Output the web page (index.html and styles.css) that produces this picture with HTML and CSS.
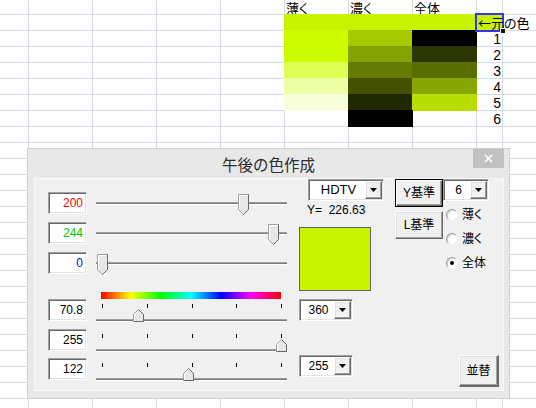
FILE: index.html
```html
<!DOCTYPE html>
<html lang="ja">
<head>
<meta charset="utf-8">
<title>午後の色作成</title>
<link rel="stylesheet" href="styles.css">
</head>
<body>
<div class="sheet">
  <div class="cell hdr c5">薄く</div>
  <div class="cell hdr c6">濃く</div>
  <div class="cell hdr c7">全体</div>

  <div class="cell fill band r1" style="background:#c8f400"></div>
  <div class="cell fill c8 r1 sel" style="background:#c8f400"><span class="orig">←元の色</span><span class="handle"></span></div>

  <div class="cell fill c5 r2" style="background:#cdfb00"></div>
  <div class="cell fill c6 r2" style="background:#a7cb00"></div>
  <div class="cell fill c7 r2" style="background:#000000"></div>
  <div class="cell num c8 r2">1</div>

  <div class="cell fill c5 r3" style="background:#cdfb00"></div>
  <div class="cell fill c6 r3" style="background:#85a300"></div>
  <div class="cell fill c7 r3" style="background:#2c3600"></div>
  <div class="cell num c8 r3">2</div>

  <div class="cell fill c5 r4" style="background:#defd55"></div>
  <div class="cell fill c6 r4" style="background:#647a00"></div>
  <div class="cell fill c7 r4" style="background:#5a6e00"></div>
  <div class="cell num c8 r4">3</div>

  <div class="cell fill c5 r5" style="background:#edfea5"></div>
  <div class="cell fill c6 r5" style="background:#435100"></div>
  <div class="cell fill c7 r5" style="background:#88a600"></div>
  <div class="cell num c8 r5">4</div>

  <div class="cell fill c5 r6" style="background:#f7ffdb"></div>
  <div class="cell fill c6 r6" style="background:#212900"></div>
  <div class="cell fill c7 r6" style="background:#b7de00"></div>
  <div class="cell num c8 r6">5</div>

  <div class="cell fill c6 r7" style="background:#000000"></div>
  <div class="cell num c8 r7">6</div>
</div>

<div class="dialog">
  <div class="titlebar">
    <span></span>
    <span class="title">午後の色作成</span>
    <span class="close"><svg width="9" height="9" viewBox="0 0 9 9"><path d="M1 1L8 8M8 1L1 8" stroke="#fff" stroke-width="1.6"/></svg></span>
  </div>
  <div class="panel">
    <div class="left">
      <div class="srow">
        <div class="tbox sunken red">200</div>
        <div class="slider">
          <span class="track mid-track"></span>
          <svg class="thumb dn" style="left:142px" width="11" height="21" viewBox="0 0 11 21"><path d="M0.5 15.5V0.5H10.5V15.5L5.5 20.5Z" fill="#e7e7e7" stroke="#a0a0a0"/><path d="M1.5 15V1.5H9.5" fill="none" stroke="#fff"/><path d="M10.5 0.5V15.5L5.5 20.5" fill="none" stroke="#696969"/></svg>
        </div>
      </div>
      <div class="srow gap8">
        <div class="tbox sunken green">244</div>
        <div class="slider">
          <span class="track mid-track"></span>
          <svg class="thumb dn" style="left:172px" width="11" height="21" viewBox="0 0 11 21"><path d="M0.5 15.5V0.5H10.5V15.5L5.5 20.5Z" fill="#e7e7e7" stroke="#a0a0a0"/><path d="M1.5 15V1.5H9.5" fill="none" stroke="#fff"/><path d="M10.5 0.5V15.5L5.5 20.5" fill="none" stroke="#696969"/></svg>
        </div>
      </div>
      <div class="srow gap8">
        <div class="tbox sunken blue">0</div>
        <div class="slider">
          <span class="track mid-track"></span>
          <svg class="thumb dn" style="left:1px" width="11" height="21" viewBox="0 0 11 21"><path d="M0.5 15.5V0.5H10.5V15.5L5.5 20.5Z" fill="#e7e7e7" stroke="#a0a0a0"/><path d="M1.5 15V1.5H9.5" fill="none" stroke="#fff"/><path d="M10.5 0.5V15.5L5.5 20.5" fill="none" stroke="#696969"/></svg>
        </div>
      </div>

      <div class="rainbow"></div>

      <div class="srow">
        <div class="tbox sunken">70.8</div>
        <div class="slider">
          <div class="ticks"><i></i><i></i><i></i><i></i><i></i></div>
          <span class="track low-track"></span>
          <svg class="thumb up" style="left:37px" width="11" height="13" viewBox="0 0 11 13"><path d="M0.5 12.5V5.5L5.5 0.5L10.5 5.5V12.5Z" fill="#e7e7e7" stroke="#a0a0a0"/><path d="M1.5 12V5.9L5.5 1.9" fill="none" stroke="#fff"/><path d="M5.5 0.5L10.5 5.5V12.5H0.5" fill="none" stroke="#696969"/></svg>
        </div>
      </div>
      <div class="srow gap8">
        <div class="tbox sunken">255</div>
        <div class="slider">
          <div class="ticks"><i></i><i></i><i></i><i></i><i></i></div>
          <span class="track low-track"></span>
          <svg class="thumb up" style="left:180px" width="11" height="13" viewBox="0 0 11 13"><path d="M0.5 12.5V5.5L5.5 0.5L10.5 5.5V12.5Z" fill="#e7e7e7" stroke="#a0a0a0"/><path d="M1.5 12V5.9L5.5 1.9" fill="none" stroke="#fff"/><path d="M5.5 0.5L10.5 5.5V12.5H0.5" fill="none" stroke="#696969"/></svg>
        </div>
      </div>
      <div class="srow gap7">
        <div class="tbox sunken">122</div>
        <div class="slider">
          <div class="ticks"><i></i><i></i><i></i><i></i><i></i></div>
          <span class="track low-track"></span>
          <svg class="thumb up" style="left:87px" width="11" height="13" viewBox="0 0 11 13"><path d="M0.5 12.5V5.5L5.5 0.5L10.5 5.5V12.5Z" fill="#e7e7e7" stroke="#a0a0a0"/><path d="M1.5 12V5.9L5.5 1.9" fill="none" stroke="#fff"/><path d="M5.5 0.5L10.5 5.5V12.5H0.5" fill="none" stroke="#696969"/></svg>
        </div>
      </div>
    </div>

    <div class="mid">
      <div class="combo sunken hdtv"><span class="val">HDTV</span><span class="drop raised"><svg width="7" height="4" viewBox="0 0 7 4"><path d="M0 0H7L3.5 4Z" fill="#000"/></svg></span></div>
      <div class="ylabel">Y=&nbsp; 226.63</div>
      <div class="swatch" style="background:#c8f400"></div>
      <div class="combo sunken cb360"><span class="val">360</span><span class="drop raised"><svg width="7" height="4" viewBox="0 0 7 4"><path d="M0 0H7L3.5 4Z" fill="#000"/></svg></span></div>
      <div class="combo sunken cb255"><span class="val">255</span><span class="drop raised"><svg width="7" height="4" viewBox="0 0 7 4"><path d="M0 0H7L3.5 4Z" fill="#000"/></svg></span></div>
    </div>

    <div class="right">
      <div class="rtop">
        <div class="colA">
          <div class="btn default">Y基準</div>
          <div class="btn raised lbtn">L基準</div>
        </div>
        <div class="colB">
          <div class="combo sunken cb6"><span class="val">6</span><span class="drop raised"><svg width="7" height="4" viewBox="0 0 7 4"><path d="M0 0H7L3.5 4Z" fill="#000"/></svg></span></div>
          <div class="radios">
            <div class="radio"><span class="dot"></span><span>薄く</span></div>
            <div class="radio"><span class="dot"></span><span>濃く</span></div>
            <div class="radio"><span class="dot on"></span><span>全体</span></div>
          </div>
        </div>
      </div>
      <div class="btn raised sort">並替</div>
    </div>
  </div>
</div>
</body>
</html>
```

FILE: styles.css
```css
* { box-sizing: border-box; }
html, body { margin: 0; padding: 0; }
body {
  width: 536px;
  height: 408px;
  overflow: hidden;
  position: relative;
  background: #fff;
  font-family: "Liberation Sans", "Noto Sans CJK JP", sans-serif;
  font-size: 12px;
  color: #000;
}

/* ---------- spreadsheet ---------- */
.sheet {
  display: grid;
  grid-template-columns: 29px repeat(7, 64px) 26px 1fr;
  grid-template-rows: 15px repeat(25, 16px);
  height: 408px;
  background-image:
    linear-gradient(to right, transparent 502px, #d4dae6 502px, #d4dae6 503px, transparent 503px),
    repeating-linear-gradient(to right, transparent 0 28px, #d4dae6 28px 29px, transparent 29px 64px),
    repeating-linear-gradient(to bottom, transparent 0 14px, #d4dae6 14px 15px, transparent 15px 16px);
  font-family: "Noto Sans CJK JP", sans-serif;
  font-size: 13px;
  font-feature-settings: "palt";
}
.cell { line-height: 16px; white-space: nowrap; }
.hdr { grid-row: 1; line-height: 15px; padding-left: 1px; }
.c5 { grid-column: 6; }
.c6 { grid-column: 7; }
.c7 { grid-column: 8; }
.c8 { grid-column: 9; }
.band { grid-column: 6 / 9; }
.r1 { grid-row: 2; }
.r2 { grid-row: 3; }
.r3 { grid-row: 4; }
.r4 { grid-row: 5; }
.r5 { grid-row: 6; }
.r6 { grid-row: 7; }
.r7 { grid-row: 8; }
.fill { margin: -1px 0 0 -1px; }
.num {
  text-align: right;
  padding-right: 2px;
  font-family: "Liberation Sans", sans-serif;
  font-size: 14px;
  line-height: 16px;
}
.sel {
  position: relative;
  outline: 2px solid #3a34f0;
  outline-offset: -1px;
}
.orig { position: relative; z-index: 1; padding-left: 2px; line-height: 17px; }
.handle {
  position: absolute;
  right: -3px;
  bottom: -3px;
  width: 6px;
  height: 6px;
  background: #111;
  border: 1px solid #fff;
  z-index: 2;
}

/* ---------- dialog ---------- */
.dialog {
  position: absolute;
  left: 27px;
  top: 148px;
  width: 483px;
  height: 251px;
  background: #e8e8e8;
  border: 1px solid #d0d0d0;
  display: flex;
  flex-direction: column;
  font-feature-settings: "palt";
}
.titlebar {
  height: 29px;
  flex: none;
  display: grid;
  grid-template-columns: 1fr auto 1fr;
}
.title {
  align-self: center;
  font-family: "Noto Sans CJK JP", sans-serif;
  font-feature-settings: normal;
  font-size: 15.5px;
  line-height: 20px;
  color: #2e2e2e;
  padding-top: 1px;
}
.close {
  justify-self: end;
  align-self: start;
  width: 31px;
  height: 19px;
  margin-right: 5px;
  background: #c2c2c2;
  display: flex;
  align-items: center;
  justify-content: center;
}
.panel {
  flex: 1;
  margin: 0 5px 7px 6px;
  background: #f0f0f0;
  border: 1px solid #f9f9f9;
  display: flex;
  align-items: flex-start;
}

.sunken {
  background: #fff;
  border: 1px solid;
  border-color: #a0a0a0 #fff #fff #a0a0a0;
  box-shadow: inset 1px 1px 0 #696969, inset -1px -1px 0 #e3e3e3;
}
.raised {
  background: #f0f0f0;
  border: 1px solid;
  border-color: #fff #696969 #696969 #fff;
  box-shadow: inset -1px -1px 0 #a0a0a0, inset 1px 1px 0 #e3e3e3;
}

/* left column */
.left {
  margin-left: 13px;
  padding-top: 13px;
  display: flex;
  flex-direction: column;
}
.srow { display: flex; height: 22px; gap: 9px; }
.gap8 { margin-top: 8px; }
.gap7 { margin-top: 7px; }
.tbox {
  width: 39px;
  height: 22px;
  text-align: right;
  padding: 0 3px 0 2px;
  line-height: 20px;
  font-size: 12px;
}
.red { color: #ff0000; }
.green { color: #00c800; }
.blue { color: #0000ff; }
.slider { position: relative; width: 191px; height: 22px; }
.track {
  display: block;
  height: 3px;
  background: linear-gradient(to bottom, #a0a0a0 0 1px, #7a7a7a 1px 2px, #fff 2px 3px);
}
.mid-track { margin-top: 10px; }
.low-track { margin-top: 11px; }
.thumb { position: absolute; display: block; }
.thumb.dn { top: 2px; }
.thumb.up { top: 10px; }
.ticks {
  display: flex;
  justify-content: space-between;
  margin: 5px 0 0 6px;
  width: 180px;
  height: 4px;
}
.ticks i { width: 1px; height: 4px; background: #000; }
.rainbow {
  margin: 18px 0 0 53px;
  width: 180px;
  height: 7px;
  background: linear-gradient(to right, #f00, #ff0 16.67%, #0f0 33.33%, #0ff 50%, #00f 66.67%, #f0f 83.33%, #f00);
}

/* middle column */
.mid {
  margin-left: 12px;
  width: 85px;
  display: flex;
  flex-direction: column;
}
.combo {
  display: flex;
  height: 22px;
  padding: 1px;
}
.combo .val {
  flex: 1;
  text-align: center;
  line-height: 18px;
  font-size: 12px;
  padding-left: 2px;
}
.combo .drop {
  width: 17px;
  height: 18px;
  display: flex;
  align-items: center;
  justify-content: center;
}
.hdtv { margin-left: 9px; width: 76px; }
.hdtv .val { font-size: 13px; }
.ylabel { margin: 2px 0 0 8px; line-height: 14px; font-size: 12px; white-space: nowrap; }
.swatch {
  margin-top: 10px;
  width: 72px;
  height: 64px;
  border: 1px solid #646464;
}
.cb360 { margin-top: 8px; width: 54px; }
.cb255 { margin-top: 34px; width: 54px; }

/* right column */
.right {
  margin-left: 11px;
  display: flex;
  flex-direction: column;
}
.rtop { display: flex; }
.colA { display: flex; flex-direction: column; }
.colB { display: flex; flex-direction: column; }
.btn {
  width: 48px;
  height: 28px;
  display: flex;
  align-items: center;
  justify-content: center;
  font-size: 12px;
  line-height: 16px;
}
.btn.default {
  background: #f0f0f0;
  border: 1px solid #000;
  box-shadow: inset 1px 1px 0 #fff, inset -1px -1px 0 #696969, inset -2px -2px 0 #a0a0a0;
}
.lbtn { margin-top: 4px; }
.cb6 { width: 46px; }
.radios {
  margin: 2px 0 0 3px;
  display: flex;
  flex-direction: column;
}
.radio {
  height: 24px;
  display: flex;
  align-items: center;
  gap: 4px;
  font-size: 12px;
  line-height: 16px;
}
.dot {
  width: 12px;
  height: 12px;
  border-radius: 50%;
  background: #fff;
  border: 1px solid;
  border-color: #a0a0a0 #f4f4f4 #f4f4f4 #a0a0a0;
  box-shadow: inset 1px 1px 0 #d0d0d0;
}
.dot.on::after {
  content: "";
  display: block;
  width: 4px;
  height: 4px;
  border-radius: 50%;
  background: #000;
  margin: 3px auto 0;
}
.sort {
  margin: 80px 0 0 64px;
  width: 40px;
  height: 32px;
  border-bottom-width: 2px;
  border-right-width: 2px;
}
```
